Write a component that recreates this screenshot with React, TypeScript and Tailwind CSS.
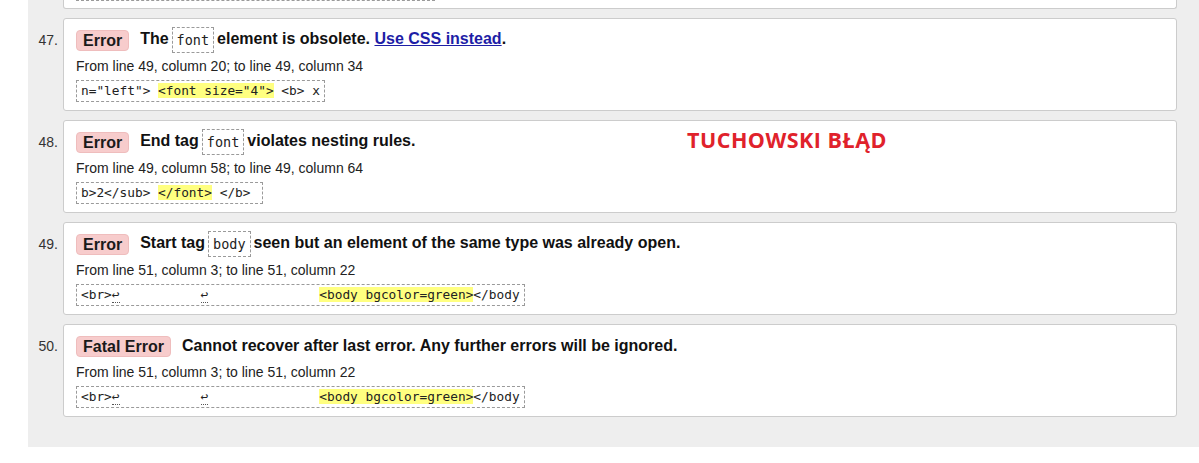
import React from 'react'

type Item = {
  num: number
  kind: string
  heading: React.ReactNode
  location: string
  extract: React.ReactNode
  note?: boolean
}

const Code = ({ children }: { children: React.ReactNode }) => (
  <code className="inline-block h-[26px] leading-[24px] px-[4px] mx-[3px] border border-dashed border-[#9a9a9a] font-['DejaVu_Sans_Mono',monospace] text-[13.5px] font-normal text-[#222] align-middle">
    {children}
  </code>
)

const Mark = ({ children }: { children: React.ReactNode }) => (
  <mark className="bg-[#ffff80] text-[#222]">{children}</mark>
)

const Lf = () => <span className="border-b border-dotted border-[#555]">↩</span>

const items: Item[] = [
  {
    num: 47,
    kind: 'Error',
    heading: (
      <>
        The<Code>font</Code>element is obsolete.{' '}
        <a href="#" className="text-[#1e1ea6] underline">Use CSS instead</a>.
      </>
    ),
    location: 'From line 49, column 20; to line 49, column 34',
    extract: (
      <>
        {'n="left"> '}
        <Mark>{'<font size="4">'}</Mark>
        {' <b> x'}
      </>
    ),
  },
  {
    num: 48,
    kind: 'Error',
    heading: (
      <>
        End tag<Code>font</Code>violates nesting rules.
      </>
    ),
    location: 'From line 49, column 58; to line 49, column 64',
    extract: (
      <>
        {'b>2</sub> '}
        <Mark>{'</font>'}</Mark>
        {' </b> '}
      </>
    ),
    note: true,
  },
  {
    num: 49,
    kind: 'Error',
    heading: (
      <>
        Start tag<Code>body</Code>seen but an element of the same type was already open.
      </>
    ),
    location: 'From line 51, column 3; to line 51, column 22',
    extract: (
      <>
        {'<br>'}
        <Lf />
        <span className="inline-block w-[81px]" />
        <Lf />
        <span className="inline-block w-[111px]" />
        <Mark>{'<body bgcolor=green>'}</Mark>
        {'</body'}
      </>
    ),
  },
  {
    num: 50,
    kind: 'Fatal Error',
    heading: <>Cannot recover after last error. Any further errors will be ignored.</>,
    location: 'From line 51, column 3; to line 51, column 22',
    extract: (
      <>
        {'<br>'}
        <Lf />
        <span className="inline-block w-[81px]" />
        <Lf />
        <span className="inline-block w-[111px]" />
        <Mark>{'<body bgcolor=green>'}</Mark>
        {'</body'}
      </>
    ),
  },
]

export default function App() {
  return (
    <div className="min-h-[463px] bg-white font-['Liberation_Sans',Arial,sans-serif] text-[#111]">
      <div className="ml-[28px] bg-[#eeeeee] pr-[22px] pb-[30px]">
        {/* tail of the previous message */}
        <div className="ml-[35px] h-[9px] bg-white border-x border-b border-[#cccccc] rounded-b-[3px]">
          <div className="ml-[12px] w-[359px] h-[1px] border-b border-dashed border-[#9a9a9a]" />
        </div>

        <ol className="flex flex-col gap-[9px] pt-[9px]">
          {items.map((it) => (
            <li key={it.num} className="flex items-start">
              <div className="w-[35px] pr-[5px] pt-[9px] h-[35px] leading-[26px] text-right text-[14px] text-[#333]">
                {it.num}.
              </div>
              <div className="relative flex-1 bg-white border border-[#cccccc] rounded-[3px] pl-[12px] pt-[8px] pb-[8px]">
                <div className="flex items-center h-[26px] text-[16px] font-bold">
                  <span className="h-[21px] leading-[20px] px-[6px] rounded-[4px] bg-[#f7cccc] border border-[#efbdbd] text-[#1a1a1a]">
                    {it.kind}
                  </span>
                  <span className="ml-[11px] whitespace-nowrap">{it.heading}</span>
                </div>
                <p className="mt-[5px] h-[16px] leading-[16px] text-[14px] text-[#222]">{it.location}</p>
                <div className="mt-[6px] flex">
                  <code className="h-[22px] leading-[20px] px-[4px] border border-dashed border-[#9a9a9a] font-['DejaVu_Sans_Mono',monospace] text-[12.8px] text-[#222] whitespace-pre">
                    {it.extract}
                  </code>
                </div>
                {it.note && (
                  <div className="absolute left-[623px] top-[8px] leading-none text-[21.5px] font-bold text-[#e0222b] font-['Open_Sans',sans-serif] tracking-[0.5px]">
                    TUCHOWSKI BŁĄD
                  </div>
                )}
              </div>
            </li>
          ))}
        </ol>
      </div>
    </div>
  )
}
